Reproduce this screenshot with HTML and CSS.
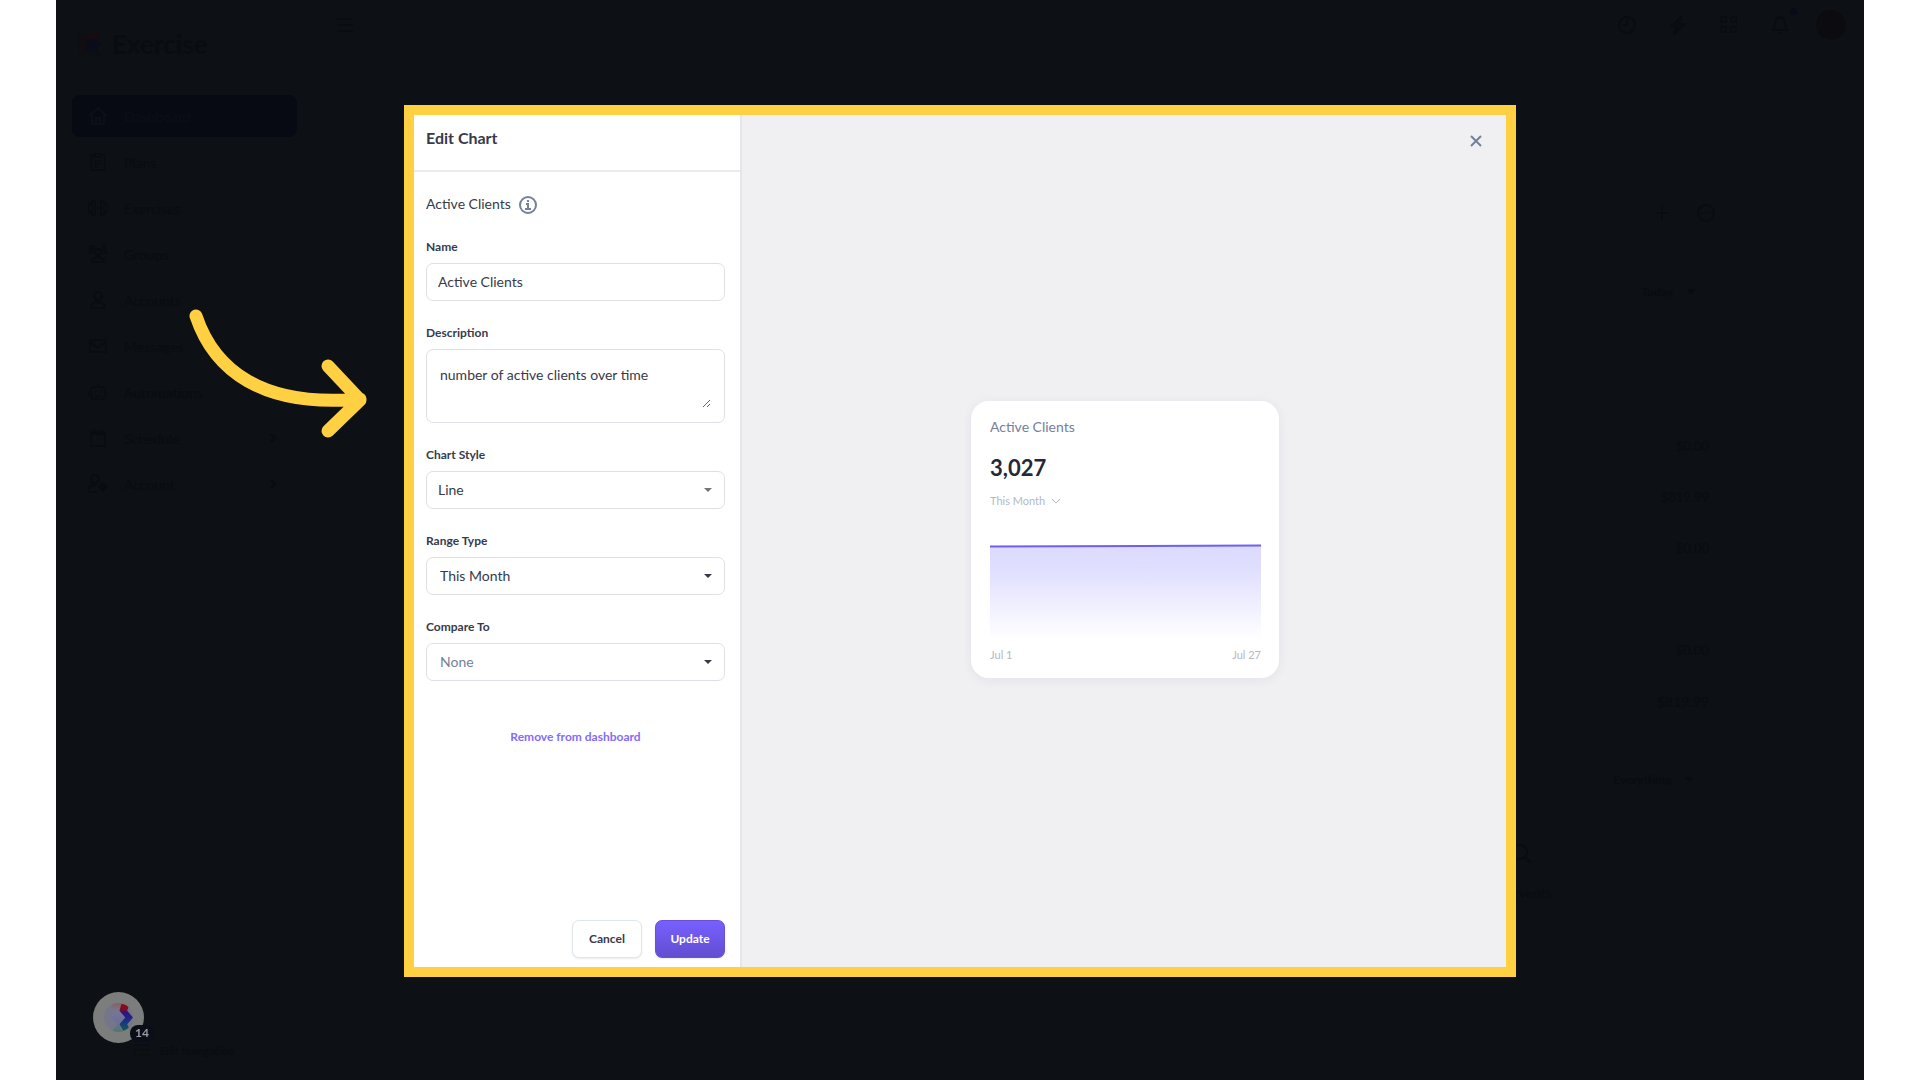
FILE: index.html
```
<!DOCTYPE html>
<html lang="en">
<head>
    <meta charset="UTF-8">
    <meta name="viewport" content="width=device-width, initial-scale=1.0">
    <title>Edit Chart</title>
    <link rel="stylesheet" href="styles.css">
</head>
<body>
    <div class="screen">
        <aside class="sidebar">
            <div class="brand">
                <svg class="brand-logo" viewBox="0 0 28 28">
                    <path d="M3 3H15L9 9L14 14L8 19L13 25H4Z" fill="#100e13"/>
                    <path d="M14 3L27 1L22 9H10Z" fill="#180c12"/>
                    <path d="M10 9H22L27 14L22 20H10L15 14Z" fill="#0b0c1b"/>
                    <path d="M10 20H22L27 26H15Z" fill="#0b0e15"/>
                </svg>
                <span>Exercise</span>
            </div>
            <nav class="nav">
                <a href="#" class="nav-item active">
                    <svg class="icon" viewBox="0 0 20 20"><path d="M1 10L10 2L19 10M4 8V18H16V8M8 18V12H12V18"/></svg>
                    <span>Dashboard</span>
                </a>
                <a href="#" class="nav-item">
                    <svg class="icon" viewBox="0 0 20 20"><path d="M7 3H3.500V18H16.500V3H13M7 2H13V5H7ZM6.500 9H13.500M6.500 12H13.500M6.500 15H11"/></svg>
                    <span>Plans</span>
                </a>
                <a href="#" class="nav-item">
                    <svg class="icon" viewBox="0 0 20 20"><path d="M8 10H12M7 3Q4 2 4 5V15Q4 18 7 17ZM13 3Q16 2 16 5V15Q16 18 13 17ZM4 5Q0 6 0 10Q0 14 4 15M16 5Q20 6 20 10Q20 14 16 15"/></svg>
                    <span>Exercises</span>
                </a>
                <a href="#" class="nav-item">
                    <svg class="icon" viewBox="0 0 20 20"><circle cx="4" cy="4" r="2"/><circle cx="16" cy="4" r="2"/><circle cx="10" cy="8" r="3"/><path d="M0 10Q2 7 5 9M20 10Q18 7 15 9M4 18Q5 13 10 13Q15 13 16 18Z"/></svg>
                    <span>Groups</span>
                </a>
                <a href="#" class="nav-item">
                    <svg class="icon" viewBox="0 0 20 20"><circle cx="10" cy="6" r="4"/><path d="M3 18Q3 12 10 12Q17 12 17 18Z"/></svg>
                    <span>Accounts</span>
                </a>
                <a href="#" class="nav-item">
                    <svg class="icon" viewBox="0 0 20 20"><path d="M2 4H18V16H2ZM2 6L10 12L18 6"/></svg>
                    <span>Messages</span>
                </a>
                <a href="#" class="nav-item">
                    <svg class="icon" viewBox="0 0 20 20"><rect x="3" y="5" width="14" height="12" rx="3"/><path d="M10 2V5M0 9V14M20 9V14M7 9V11M13 9V11M7 14H13"/></svg>
                    <span>Automations</span>
                </a>
                <a href="#" class="nav-item">
                    <svg class="icon" viewBox="0 0 20 20"><path d="M3 4H17V18H3ZM3 6H17M6 1V4M14 1V4"/></svg>
                    <span>Schedule</span>
                    <svg class="chevron" viewBox="0 0 8 8"><path d="M2 0L6 4L2 8"/></svg>
                </a>
                <a href="#" class="nav-item">
                    <svg class="icon" viewBox="0 0 20 20"><circle cx="7" cy="5" r="4"/><path d="M9 18H0Q0 11 7 11H9"/><circle cx="15" cy="13" r="3"/><path d="M15 8V18M10 13H20"/></svg>
                    <span>Account</span>
                    <svg class="chevron" viewBox="0 0 8 8"><path d="M2 0L6 4L2 8"/></svg>
                </a>
            </nav>
            <a href="#" class="edit-nav">
                <svg class="icon" viewBox="0 0 20 20"><path d="M1 4H3M6 4H19M1 10H3M6 10H19M1 16H3M6 16H19"/></svg>
                <span>Edit Navigation</span>
            </a>
        </aside>

        <main class="main">
            <header class="topbar">
                <button class="icon-btn" aria-label="Toggle menu">
                    <svg class="icon" viewBox="0 0 20 20"><path d="M2 4H18M2 10H18M2 16H18"/></svg>
                </button>
                <div class="topbar-actions">
                    <button class="icon-btn" aria-label="History">
                        <svg class="icon" viewBox="0 0 20 20"><circle cx="10" cy="10" r="8"/><path d="M10 4V10H6"/></svg>
                    </button>
                    <button class="icon-btn" aria-label="Quick actions">
                        <svg class="icon" viewBox="0 0 20 20"><path d="M14 1L4 11H9L6 19L16 9H11Z"/></svg>
                    </button>
                    <button class="icon-btn" aria-label="Apps">
                        <svg class="icon" viewBox="0 0 20 20"><path d="M2 2H7V7H2ZM12 2H17V7H12ZM2 12H7V17H2ZM12 12H17V17H12Z"/></svg>
                    </button>
                    <button class="icon-btn bell" aria-label="Notifications">
                        <svg class="icon" viewBox="0 0 20 20"><path d="M3 15Q5 12 5 8Q5 3 10 2Q15 3 15 8Q15 12 17 15ZM8 18H12"/></svg>
                    </button>
                    <button class="avatar" aria-label="Profile"></button>
                </div>
            </header>
            <div class="page-actions">
                <button class="icon-btn" aria-label="Add chart">
                    <svg class="icon" viewBox="0 0 20 20"><path d="M3 10H17M10 3V17"/></svg>
                </button>
                <button class="icon-btn" aria-label="More">
                    <svg class="icon" viewBox="0 0 20 20"><circle cx="10" cy="10" r="8"/><path d="M5 10H7M9 10H11M13 10H15"/></svg>
                </button>
            </div>
            <section class="board sales">
                <button class="filter">Today <span class="caret"></span></button>
                <ul class="amounts">
                    <li>$0.00</li>
                    <li>$819.99</li>
                    <li>$0.00</li>
                    <li></li>
                    <li>$0.00</li>
                    <li class="total">$819.99</li>
                </ul>
            </section>
            <section class="board feed">
                <button class="filter">Everything <span class="caret"></span></button>
                <div class="empty">
                    <svg class="icon" viewBox="0 0 20 20"><circle cx="8" cy="8" r="7"/><path d="M13 13L19 19"/></svg>
                    <p>No events</p>
                </div>
            </section>
        </main>
    </div>

    <button class="launcher" aria-label="Open checklist, 14 items left">
        <svg class="launcher-logo" viewBox="0 0 30 30">
            <defs>
                <clipPath id="disc"><circle cx="15" cy="15" r="15"/></clipPath>
                <linearGradient id="soft" x1="0" y1="0" x2="0" y2="1">
                    <stop offset="0" stop-color="#8a6061"/>
                    <stop offset="0.3" stop-color="#77759a"/>
                    <stop offset="0.7" stop-color="#6c6e96"/>
                    <stop offset="1" stop-color="#4e7a69"/>
                </linearGradient>
                <linearGradient id="bold" x1="0" y1="0" x2="0" y2="1">
                    <stop offset="0" stop-color="#8d0b17"/>
                    <stop offset="0.2" stop-color="#7d0c20"/>
                    <stop offset="0.32" stop-color="#31127f"/>
                    <stop offset="0.65" stop-color="#153488"/>
                    <stop offset="1" stop-color="#126147"/>
                </linearGradient>
            </defs>
            <g clip-path="url(#disc)">
                <rect width="30" height="30" fill="#76768a"/>
                <path d="M10 0H22L15 8L22 15L15 22L20 30H8L14 22L7 15L14 8L7 5Z" fill="url(#soft)"/>
                <path d="M18 1L26 2L24 8L30 15L24 22L26 26L20 29L16 22L22 15L16 8Z" fill="url(#bold)"/>
            </g>
        </svg>
        <span class="badge">14</span>
    </button>

    <svg class="pointer" viewBox="0 0 180 130">
        <path d="M7 8C25 62 73 100 171 91M139 58L171 92L139 123"/>
    </svg>

    <div class="overlay">
        <div class="dialog" role="dialog" aria-labelledby="dialogTitle">
            <form class="panel">
                <h1 class="panel-title" id="dialogTitle">Edit Chart</h1>
                <div class="panel-body">
                    <div class="chart-type">
                        <span>Active Clients</span>
                        <svg class="info" viewBox="0 0 20 20">
                            <circle cx="10" cy="10" r="8"/>
                            <path d="M8 9H10V14M7 14H13M9 6H11"/>
                        </svg>
                    </div>

                    <label for="name">Name</label>
                    <input class="control" id="name" type="text" value="Active Clients">

                    <label for="description">Description</label>
                    <div class="textarea-box">
                        <textarea id="description">number of active clients over time</textarea>
                    </div>

                    <label for="style">Chart Style</label>
                    <div class="select-box light">
                        <select class="control" id="style"><option>Line</option><option>Bar</option></select>
                    </div>

                    <label for="range">Range Type</label>
                    <div class="select-box">
                        <select class="control inset" id="range"><option>This Month</option></select>
                    </div>

                    <label for="compare">Compare To</label>
                    <div class="select-box">
                        <select class="control inset muted" id="compare"><option>None</option></select>
                    </div>

                    <a href="#" class="remove">Remove from dashboard</a>
                </div>
                <div class="panel-footer">
                    <button type="button" class="btn">Cancel</button>
                    <button type="submit" class="btn btn-primary">Update</button>
                </div>
            </form>

            <div class="preview">
                <button class="close" aria-label="Close">
                    <svg viewBox="0 0 12 12"><path d="M1 1L11 11M11 1L1 11"/></svg>
                </button>
                <div class="card">
                    <h2>Active Clients</h2>
                    <div class="value">3,027</div>
                    <button class="period">
                        This Month
                        <svg viewBox="0 0 10 6"><path d="M1 1L5 5L9 1"/></svg>
                    </button>
                    <svg class="chart" viewBox="0 0 271 92" preserveAspectRatio="none">
                        <defs>
                            <linearGradient id="area" x1="0" y1="0" x2="0" y2="1">
                                <stop offset="0" stop-color="#dcdbfe"/>
                                <stop offset="0.25" stop-color="#dfdeff"/>
                                <stop offset="1" stop-color="#fefeff"/>
                            </linearGradient>
                        </defs>
                        <path d="M0 1L271 0V92H0Z" fill="url(#area)"/>
                        <path d="M0 1.500L271 0.500" class="line"/>
                    </svg>
                    <div class="axis"><span>Jul 1</span><span>Jul 27</span></div>
                </div>
            </div>
        </div>
    </div>
</body>
</html>
```
FILE: styles.css
```
* {
    margin: 0;
    padding: 0;
    box-sizing: border-box;
}

body {
    background: #fff;
    font-family: Lato, "Open Sans", sans-serif;
    font-size: 14px;
    color: #363a4b;
    height: 100vh;
    overflow: hidden;
}

button, input, select, textarea {
    font: inherit;
    color: inherit;
}

button {
    background: none;
    border: none;
    cursor: pointer;
}

a {
    color: inherit;
    text-decoration: none;
}

/* dimmed dashboard */
.screen {
    height: 100vh;
    margin: 0 56px;
    display: flex;
    background: #0d1014;
    color: #0a0c10;
}

.icon {
    width: 20px;
    height: 20px;
    fill: none;
    stroke: currentColor;
    stroke-width: 2;
}

.sidebar {
    width: 256px;
    padding: 27px 15px 22px 16px;
    display: flex;
    flex-direction: column;
}

.brand {
    display: flex;
    align-items: center;
    gap: 10px;
    height: 34px;
    margin-bottom: 34px;
    padding-left: 4px;
    font-size: 26px;
    font-weight: 700;
}

.brand-logo {
    width: 26px;
    height: 26px;
}

.nav {
    display: flex;
    flex-direction: column;
    gap: 4px;
}

.nav-item {
    display: flex;
    align-items: center;
    gap: 16px;
    height: 42px;
    padding: 0 16px;
    border-radius: 8px;
}

.nav-item.active {
    background: #070a12;
    color: #0c0f15;
}

.chevron {
    width: 8px;
    height: 8px;
    margin: 0 4px 0 auto;
    fill: none;
    stroke: currentColor;
    stroke-width: 2;
}

.edit-nav {
    display: flex;
    align-items: center;
    gap: 10px;
    margin-top: auto;
    padding-left: 62px;
    font-size: 11px;
}

.edit-nav .icon {
    width: 16px;
    height: 16px;
}

.main {
    flex: 1;
    display: flex;
    flex-direction: column;
}

.topbar {
    display: flex;
    align-items: center;
    justify-content: space-between;
    height: 50px;
    padding: 0 18px 0 23px;
}

.topbar-actions {
    display: flex;
    align-items: center;
    gap: 31px;
}

.icon-btn {
    height: 20px;
}

.bell {
    position: relative;
    margin-right: -5px;
}

.bell::after {
    content: "";
    position: absolute;
    top: -7px;
    right: -7px;
    width: 7px;
    height: 7px;
    border-radius: 50%;
    background: #090b18;
}

.avatar {
    width: 30px;
    height: 30px;
    border-radius: 50%;
    background: #0c0c10;
}

.page-actions {
    display: flex;
    justify-content: flex-end;
    gap: 24px;
    margin-top: 153px;
    padding-right: 148px;
}

.board {
    display: flex;
    flex-direction: column;
    align-items: flex-end;
    margin-right: 139px;
    padding-right: 15px;
    border-right: 1px solid #0c0f13;
}

.sales {
    margin-top: 54px;
}

.filter {
    display: flex;
    align-items: center;
    gap: 14px;
    height: 28px;
    padding: 0 14px 0 8px;
    font-size: 12px;
    font-weight: 700;
}

.caret {
    border: 4px solid transparent;
    border-top: 5px solid currentColor;
    border-bottom: 0;
}

.amounts {
    margin-top: 116px;
    list-style: none;
    text-align: right;
    font-size: 13px;
}

.amounts li {
    height: 51px;
    line-height: 51px;
}

.amounts .total {
    font-size: 14px;
}

.feed {
    margin-top: 38px;
    padding-right: 0;
    flex: 1;
}

.feed .filter {
    margin-right: 16px;
    border: 1px solid #0c0f13;
}

.feed .filter + .empty {
    margin-top: 13px;
}

.empty {
    display: flex;
    flex-direction: column;
    gap: 20px;
    width: 100%;
    padding: 37px 172px 0 0;
    border-top: 1px solid #0c0f13;
    align-items: flex-end;
}

.empty .icon {
    margin-right: 20px;
}

/* checklist launcher */
.launcher {
    position: fixed;
    left: 93px;
    bottom: 37px;
    width: 51px;
    height: 51px;
    border-radius: 50%;
    background: #7c7d7d;
    display: flex;
    align-items: center;
    justify-content: center;
}

.launcher-logo {
    width: 29px;
    height: 29px;
}

.badge {
    position: absolute;
    right: -10px;
    bottom: 1px;
    width: 24px;
    height: 17px;
    border-radius: 8px;
    background: #0a0e1a;
    color: #9a9a9b;
    font-size: 12px;
    font-weight: 700;
    line-height: 16px;
}

.pointer {
    position: fixed;
    top: 308px;
    left: 189px;
    width: 180px;
    height: 130px;
    fill: none;
    stroke: #ffd042;
    stroke-width: 13;
    stroke-linecap: round;
    stroke-linejoin: round;
}

/* dialog */
.overlay {
    position: fixed;
    inset: 0;
    padding: 105px 404px 103px;
    display: flex;
    pointer-events: none;
}

.dialog {
    flex: 1;
    display: flex;
    border: 10px solid #ffd042;
    background: #fff;
    pointer-events: auto;
}

.panel {
    width: 328px;
    display: flex;
    flex-direction: column;
    border-right: 2px solid #e5e6eb;
}

.panel-title {
    height: 57px;
    padding-left: 12px;
    border-bottom: 2px solid #ebebef;
    font-size: 16px;
    font-weight: 700;
    line-height: 46px;
}

.panel-body {
    flex: 1;
    display: flex;
    flex-direction: column;
    padding: 23px 15px 0 12px;
}

.chart-type {
    display: flex;
    align-items: center;
    gap: 7px;
    height: 20px;
    line-height: 18px;
}

.chart-type span {
    padding-bottom: 2px;
}

.info {
    width: 20px;
    height: 20px;
    fill: none;
    stroke: #75809b;
    stroke-width: 2;
}

label {
    margin: 24px 0 8px;
    font-size: 12px;
    font-weight: 700;
    line-height: 16px;
}

.control {
    width: 100%;
    height: 38px;
    padding: 0 11px 2px;
    border: 1px solid #dfe0e6;
    border-radius: 7px;
    background: #fff;
    appearance: none;
}

.inset {
    padding-left: 13px;
}

.muted {
    color: #75809b;
}

.textarea-box {
    height: 74px;
    padding: 12px 13px;
    border: 1px solid #dfe0e6;
    border-radius: 7px;
}

textarea {
    display: block;
    width: 100%;
    height: 46px;
    padding-top: 3px;
    border: none;
    outline: none;
    background: none;
    line-height: 20px;
    resize: vertical;
}

.select-box {
    position: relative;
}

.select-box::after {
    content: "";
    position: absolute;
    top: 17px;
    right: 13px;
    border: 4px solid transparent;
    border-top-color: #363a4b;
    border-bottom: 0;
    pointer-events: none;
}

.light::after {
    border-top-color: #757575;
}

.remove {
    align-self: center;
    margin-top: 48px;
    color: #836cfb;
    font-size: 12px;
    font-weight: 700;
    line-height: 16px;
}

.panel-footer {
    display: flex;
    justify-content: flex-end;
    gap: 13px;
    padding: 0 15px 9px 0;
}

.btn {
    min-width: 70px;
    height: 38px;
    padding: 0 14px 1px;
    border: 1px solid #dfe6ee;
    border-radius: 7px;
    background: #fff;
    box-shadow: 0 1px 2px rgba(40, 60, 90, 0.1);
    font-size: 12px;
    font-weight: 700;
}

.btn-primary {
    border-color: #6650dc;
    background: linear-gradient(#785fff, #614fd0);
    color: #fff;
}

.preview {
    position: relative;
    flex: 1;
    display: flex;
    align-items: center;
    justify-content: center;
    padding: 0 0 3px 2px;
    background: #f0f0f3;
}

.close {
    position: absolute;
    top: 16px;
    right: 20px;
    width: 20px;
    height: 20px;
}

.close svg {
    display: block;
    width: 12px;
    margin: auto;
    fill: none;
    stroke: #75809b;
    stroke-width: 2;
}

.card {
    width: 308px;
    padding: 17px 18px 15px 19px;
    border-radius: 18px;
    background: #fff;
    box-shadow: 0 2px 12px rgba(30, 30, 60, 0.06);
}

.card h2 {
    color: #75809b;
    font-size: 14px;
    font-weight: 400;
    line-height: 18px;
}

.value {
    margin-top: 20px;
    color: #242839;
    font-size: 22px;
    font-weight: 700;
    line-height: 24px;
}

.period {
    display: flex;
    align-items: center;
    gap: 6px;
    margin-top: 13px;
    color: #b4b8c4;
    font-size: 11px;
    line-height: 16px;
}

.period svg {
    width: 10px;
    fill: none;
    stroke: currentColor;
}

.chart {
    display: block;
    width: 100%;
    height: 92px;
    margin-top: 36px;
    overflow: visible;
}

.line {
    fill: none;
    stroke: #6c60f8;
    stroke-width: 2;
}

.axis {
    display: flex;
    justify-content: space-between;
    margin-top: 10px;
    color: #b4b8c4;
    font-size: 11px;
    line-height: 16px;
}
```
